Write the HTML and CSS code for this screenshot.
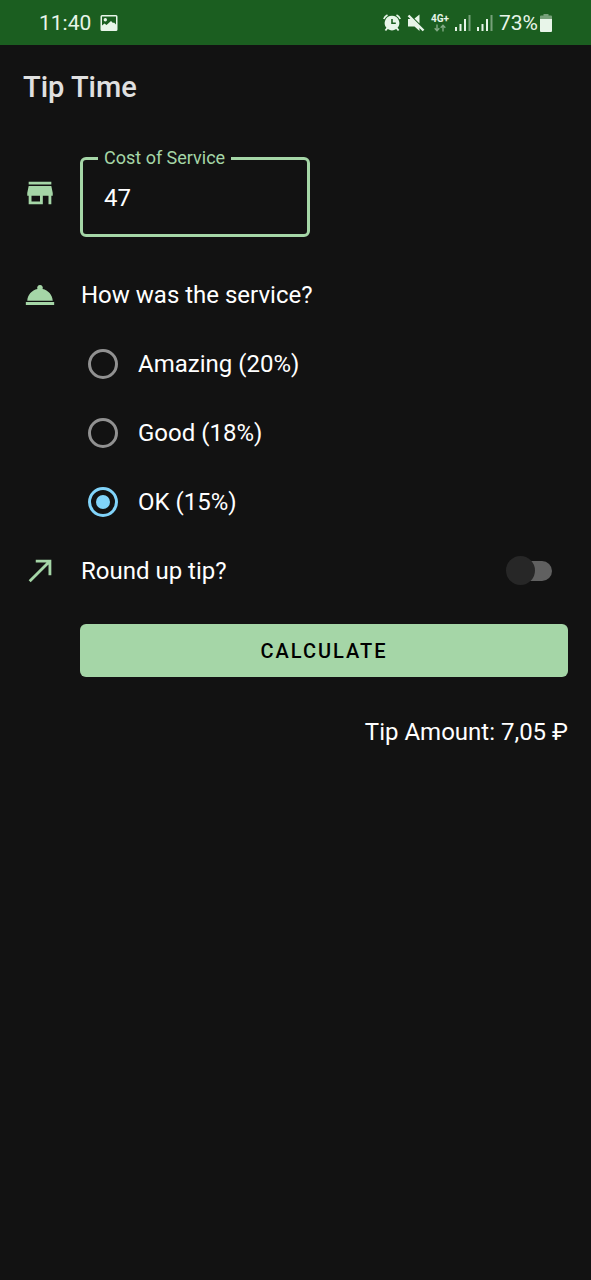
FILE: index.html
```html
<!DOCTYPE html>
<html lang="en">
<head>
<meta charset="utf-8">
<meta name="viewport" content="width=device-width, initial-scale=1">
<title>Tip Time</title>
<link rel="stylesheet" href="styles.css">
</head>
<body>
<header class="status-bar">
  <div class="status-left">
    <span class="clock">11:40</span>
    <svg class="icon-picture" viewBox="0 0 18 18" aria-hidden="true"><path fill="currentColor" fill-rule="evenodd" d="M2 1h14a1.500 1.500 0 0 1 1.500 1.500v13a1.500 1.500 0 0 1-1.500 1.500H2a1.500 1.500 0 0 1-1.500-1.500v-13A1.500 1.500 0 0 1 2 1zM2 2.500v9l2.500-2 2 1.500 4.500-4 2 2 1-.5 2 2v-8zM5.300 4a1.700 1.700 0 1 1 0 3.400 1.700 1.700 0 0 1 0-3.400z"/></svg>
  </div>
  <div class="status-right">
    <svg class="icon-status" viewBox="0 0 18 18" aria-hidden="true"><path fill="currentColor" fill-rule="evenodd" d="M9 1.700a7.300 7.300 0 0 1 5.600 12l1.700 2.200-1.400 1-1.700-2a7.300 7.300 0 0 1-8.400 0l-1.700 2-1.400-1 1.700-2.200A7.300 7.300 0 0 1 9 1.700zM8.200 5v5h4.600V8.400H9.800V5z"/><path fill="none" stroke="currentColor" stroke-width="1.700" d="M.8 5A8 8 0 0 1 4.500 1M17.200 5a8 8 0 0 0-3.700-4"/></svg>
    <svg class="icon-status" viewBox="0 0 18 18" aria-hidden="true"><path fill="currentColor" d="M1 5h3.500l8 8v4l-5-4.500H1zM7.500 4.500 12.500.5v9z"/><path stroke="currentColor" stroke-width="2.400" d="m1.500 1.500 15 15"/></svg>
    <div class="network">
      <span class="network-name">4G+</span>
      <svg class="icon-traffic" viewBox="0 0 12 8" aria-hidden="true"><path fill="none" stroke="currentColor" stroke-width="1.400" d="M3 .5v6M.7 4.300 3 6.700l2.300-2.400M9 7.500v-6M6.700 3.700 9 1.300l2.300 2.400"/></svg>
    </div>
    <svg class="icon-signal" viewBox="0 0 16 17" aria-hidden="true"><path fill="currentColor" d="M0 13h2v4H0zM4.500 10h2v7h-2zM9 5h2v12H9z"/><path fill="currentColor" opacity=".45" d="M13.500 1h2v16h-2z"/></svg>
    <svg class="icon-signal" viewBox="0 0 16 17" aria-hidden="true"><path fill="currentColor" d="M0 13h2v4H0zM4.500 10h2v7h-2zM9 5h2v12H9z"/><path fill="currentColor" opacity=".45" d="M13.500 1h2v16h-2z"/></svg>
    <div class="battery">
      <span class="battery-level">73%</span>
      <svg class="icon-battery" viewBox="0 0 12 18" aria-hidden="true"><path fill="currentColor" opacity=".45" d="M3.500 0h5v1.500H11a1 1 0 0 1 1 1V5H0V2.500a1 1 0 0 1 1-1h2.500z"/><path fill="currentColor" d="M0 5h12v12a1 1 0 0 1-1 1H1a1 1 0 0 1-1-1z"/></svg>
    </div>
  </div>
</header>
<h1 class="app-title">Tip Time</h1>
<main>
  <form class="tip-form">
    <div class="row row-cost">
      <svg class="icon" viewBox="0 0 24 24" aria-hidden="true"><path fill="currentColor" d="M20 4H4v2h16V4zm1 10v-2l-1-5H4l-1 5v2h1v6h10v-6h4v6h2v-6h1zm-9 4H6v-4h6v4z"/></svg>
      <fieldset class="outlined-field">
        <legend class="field-legend"><label for="cost">Cost of Service</label></legend>
        <input class="field-input" id="cost" type="text" inputmode="decimal" value="47">
      </fieldset>
    </div>
    <div class="row">
      <svg class="icon" viewBox="0 0 24 24" aria-hidden="true"><path fill="currentColor" d="M2 17h20v2H2zm11.840-9.210A2.006 2.006 0 0 0 12 5a2.006 2.006 0 0 0-1.840 2.790C6.250 8.600 3.270 11.930 3 16h18c-.27-4.070-3.250-7.400-7.160-8.210z"/></svg>
      <p class="text" id="service-question">How was the service?</p>
    </div>
    <div class="options" role="radiogroup" aria-labelledby="service-question">
      <label class="option text"><input class="radio" type="radio" name="service">Amazing (20%)</label>
      <label class="option text"><input class="radio" type="radio" name="service">Good (18%)</label>
      <label class="option text"><input class="radio" type="radio" name="service" checked>OK (15%)</label>
    </div>
    <div class="row">
      <svg class="icon" viewBox="0 0 24 24" aria-hidden="true"><path fill="currentColor" d="M9 4v2h7.590L4 18.590 5.410 20 18 7.410V15h2V4z"/></svg>
      <label class="text switch-label" for="round-up">Round up tip?</label>
      <input class="switch" id="round-up" type="checkbox" role="switch">
    </div>
    <button class="calculate" type="button">CALCULATE</button>
    <output class="result text">Tip Amount: 7,05 ₽</output>
  </form>
</main>
</body>
</html>
```
FILE: styles.css
```css
* {
  box-sizing: border-box;
}

body {
  margin: 0;
  min-height: 100vh;
  background: #121212;
  color: #fff;
  font-family: Roboto, "Noto Sans", sans-serif;
}

.status-bar {
  display: flex;
  align-items: center;
  justify-content: space-between;
  height: 45px;
  padding: 0 39px;
  background: #1b5e20;
  color: #e8f5e9;
  font-size: 21px;
}

.status-left,
.status-right,
.battery {
  display: flex;
  align-items: center;
}

.status-left {
  gap: 9px;
}

.status-right {
  gap: 6px;
}

.battery {
  gap: 2px;
}

.icon-picture,
.icon-status {
  width: 18px;
  height: 18px;
}

.network {
  display: flex;
  flex-direction: column;
  align-items: center;
}

.network-name {
  font-size: 10px;
  line-height: 10px;
  font-weight: 700;
}

.icon-traffic {
  width: 12px;
  height: 8px;
  opacity: .5;
}

.icon-signal {
  width: 16px;
  height: 17px;
}

.icon-battery {
  width: 12px;
  height: 18px;
}

.app-title {
  margin: 0;
  padding: 0 23px;
  font-size: 29px;
  line-height: 84px;
  font-weight: 500;
  color: #e0e0e0;
}

.tip-form {
  display: flex;
  flex-direction: column;
  padding: 19px 23px 23px;
}

.row {
  display: flex;
  align-items: center;
  gap: 24px;
  min-height: 69px;
}

.row-cost {
  margin-bottom: 23px;
}

.icon {
  flex: none;
  width: 34px;
  height: 34px;
  color: #a5d6a7;
}

.row-cost .icon {
  margin-right: -1px;
}

.outlined-field {
  width: 230px;
  min-width: 0;
  margin: 0;
  padding: 0 15px;
  border: 3px solid #a5d6a7;
  border-radius: 6px;
}

.field-legend {
  padding: 0 6px;
  font-size: 18px;
  line-height: 20px;
  color: #a5d6a7;
}

.field-input {
  display: block;
  width: 100%;
  height: 66px;
  padding: 0 6px 6px;
  border: 0;
  outline: 0;
  background: transparent;
  color: #fff;
  font: inherit;
  font-size: 24px;
}

.text {
  margin: 0;
  font-size: 24px;
  line-height: 32px;
}

.options {
  display: flex;
  flex-direction: column;
  padding-left: 65px;
}

.option {
  display: flex;
  align-items: center;
  gap: 20px;
  min-height: 69px;
}

.radio {
  appearance: none;
  display: grid;
  place-items: center;
  width: 30px;
  height: 30px;
  margin: 0;
  border: 3px solid #919191;
  border-radius: 50%;
}

.radio:checked {
  border-color: #81d4fa;
}

.radio:checked::before {
  content: "";
  width: 14px;
  height: 14px;
  border-radius: 50%;
  background: #81d4fa;
}

.switch-label {
  flex: 1;
}

.switch {
  appearance: none;
  display: flex;
  align-items: center;
  width: 46px;
  height: 20px;
  margin: 0 16px 0 0;
  border-radius: 10px;
  background: linear-gradient(to right, transparent 12px, #606060 12px);
}

.switch::before {
  content: "";
  flex: none;
  width: 29px;
  height: 29px;
  border-radius: 50%;
  background: #272727;
}

.switch:checked {
  justify-content: flex-end;
}

.calculate {
  height: 53px;
  margin: 19px 0 0 57px;
  border: 0;
  border-radius: 6px;
  background: #a5d6a7;
  color: #000;
  font: inherit;
  font-size: 20px;
  font-weight: 500;
  letter-spacing: 2px;
}

.result {
  margin-top: 39px;
  text-align: right;
}
```
